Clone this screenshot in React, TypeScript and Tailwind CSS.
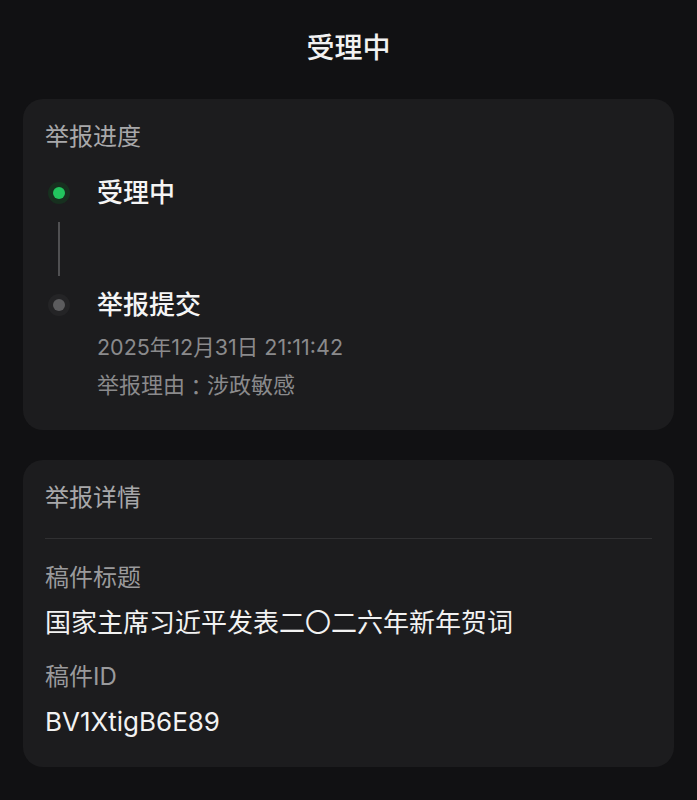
import React from "react";

const font = {
  fontFamily: '"Inter", "Noto Sans CJK SC", sans-serif',
};

export default function App() {
  return (
    <div
      className="min-h-screen w-full bg-[#111113] pt-[30px] pb-[33px]"
      style={font}
    >
      <h1 className="text-center text-[28px] leading-[36px] font-medium text-[#f2f2f2]">
        受理中
      </h1>

      <div className="mx-[23px] mt-[33px] rounded-[20px] bg-[#1c1c1e] px-[22px] pt-[22px] pb-[30px]">
        <div className="text-[24px] leading-[32px] text-[#a8a8aa]">举报进度</div>

        <div className="mt-[23px] flex">
          <div className="flex w-[28px] flex-col items-center">
            <div className="flex h-[34px] items-center justify-center">
              <div className="flex h-[22px] w-[22px] items-center justify-center rounded-full bg-[#17301f]">
                <div className="h-[12px] w-[12px] rounded-full bg-[#22c55e]" />
              </div>
            </div>
            <div className="mt-3 mb-3 h-[54px] w-[1.5px] bg-[#505052]" />
          </div>
          <div className="ml-[24px] text-[26px] leading-[34px] font-medium text-[#f5f5f5]">
            受理中
          </div>
        </div>

        <div className="flex">
          <div className="flex w-[28px] flex-col items-center">
            <div className="flex h-[34px] items-center justify-center">
              <div className="flex h-[22px] w-[22px] items-center justify-center rounded-full bg-[#242426]">
                <div className="h-[12px] w-[12px] rounded-full bg-[#5c5c5e]" />
              </div>
            </div>
          </div>
          <div className="ml-[24px]">
            <div className="text-[26px] leading-[34px] font-medium text-[#f5f5f5]">
              举报提交
            </div>
            <div className="mt-[10px] text-[21.5px] leading-[30px] text-[#8a8a8c]">
              2025年12月31日 21:11:42
            </div>
            <div className="mt-[8px] flex h-[30px] items-center text-[22px] leading-[30px] text-[#8a8a8c]">
              <span>举报理由</span>
              <span
                className="leading-none"
                style={{ fontFamily: '"Noto Sans CJK TC", sans-serif' }}
              >
                ：
              </span>
              <span>涉政敏感</span>
            </div>
          </div>
        </div>
      </div>

      <div className="mx-[23px] mt-[30px] rounded-[20px] bg-[#1c1c1e] px-[22px] pt-[22px] pb-[27px]">
        <div className="text-[24px] leading-[32px] text-[#a8a8aa]">举报详情</div>
        <div className="mt-[24px] h-px w-full bg-[#303032]" />
        <div className="mt-[23px] text-[24px] leading-[32px] text-[#9a9a9c]">稿件标题</div>
        <div className="mt-[11px] text-[26px] leading-[36px] text-[#f2f2f2]">
          国家主席习近平发表二〇二六年新年贺词
        </div>
        <div className="mt-[20px] text-[24px] leading-[32px] text-[#9a9a9c]">稿件ID</div>
        <div className="mt-[11px] text-[26px] leading-[36px] text-[#f2f2f2]">
          BV1XtigB6E89
        </div>
      </div>
    </div>
  );
}
